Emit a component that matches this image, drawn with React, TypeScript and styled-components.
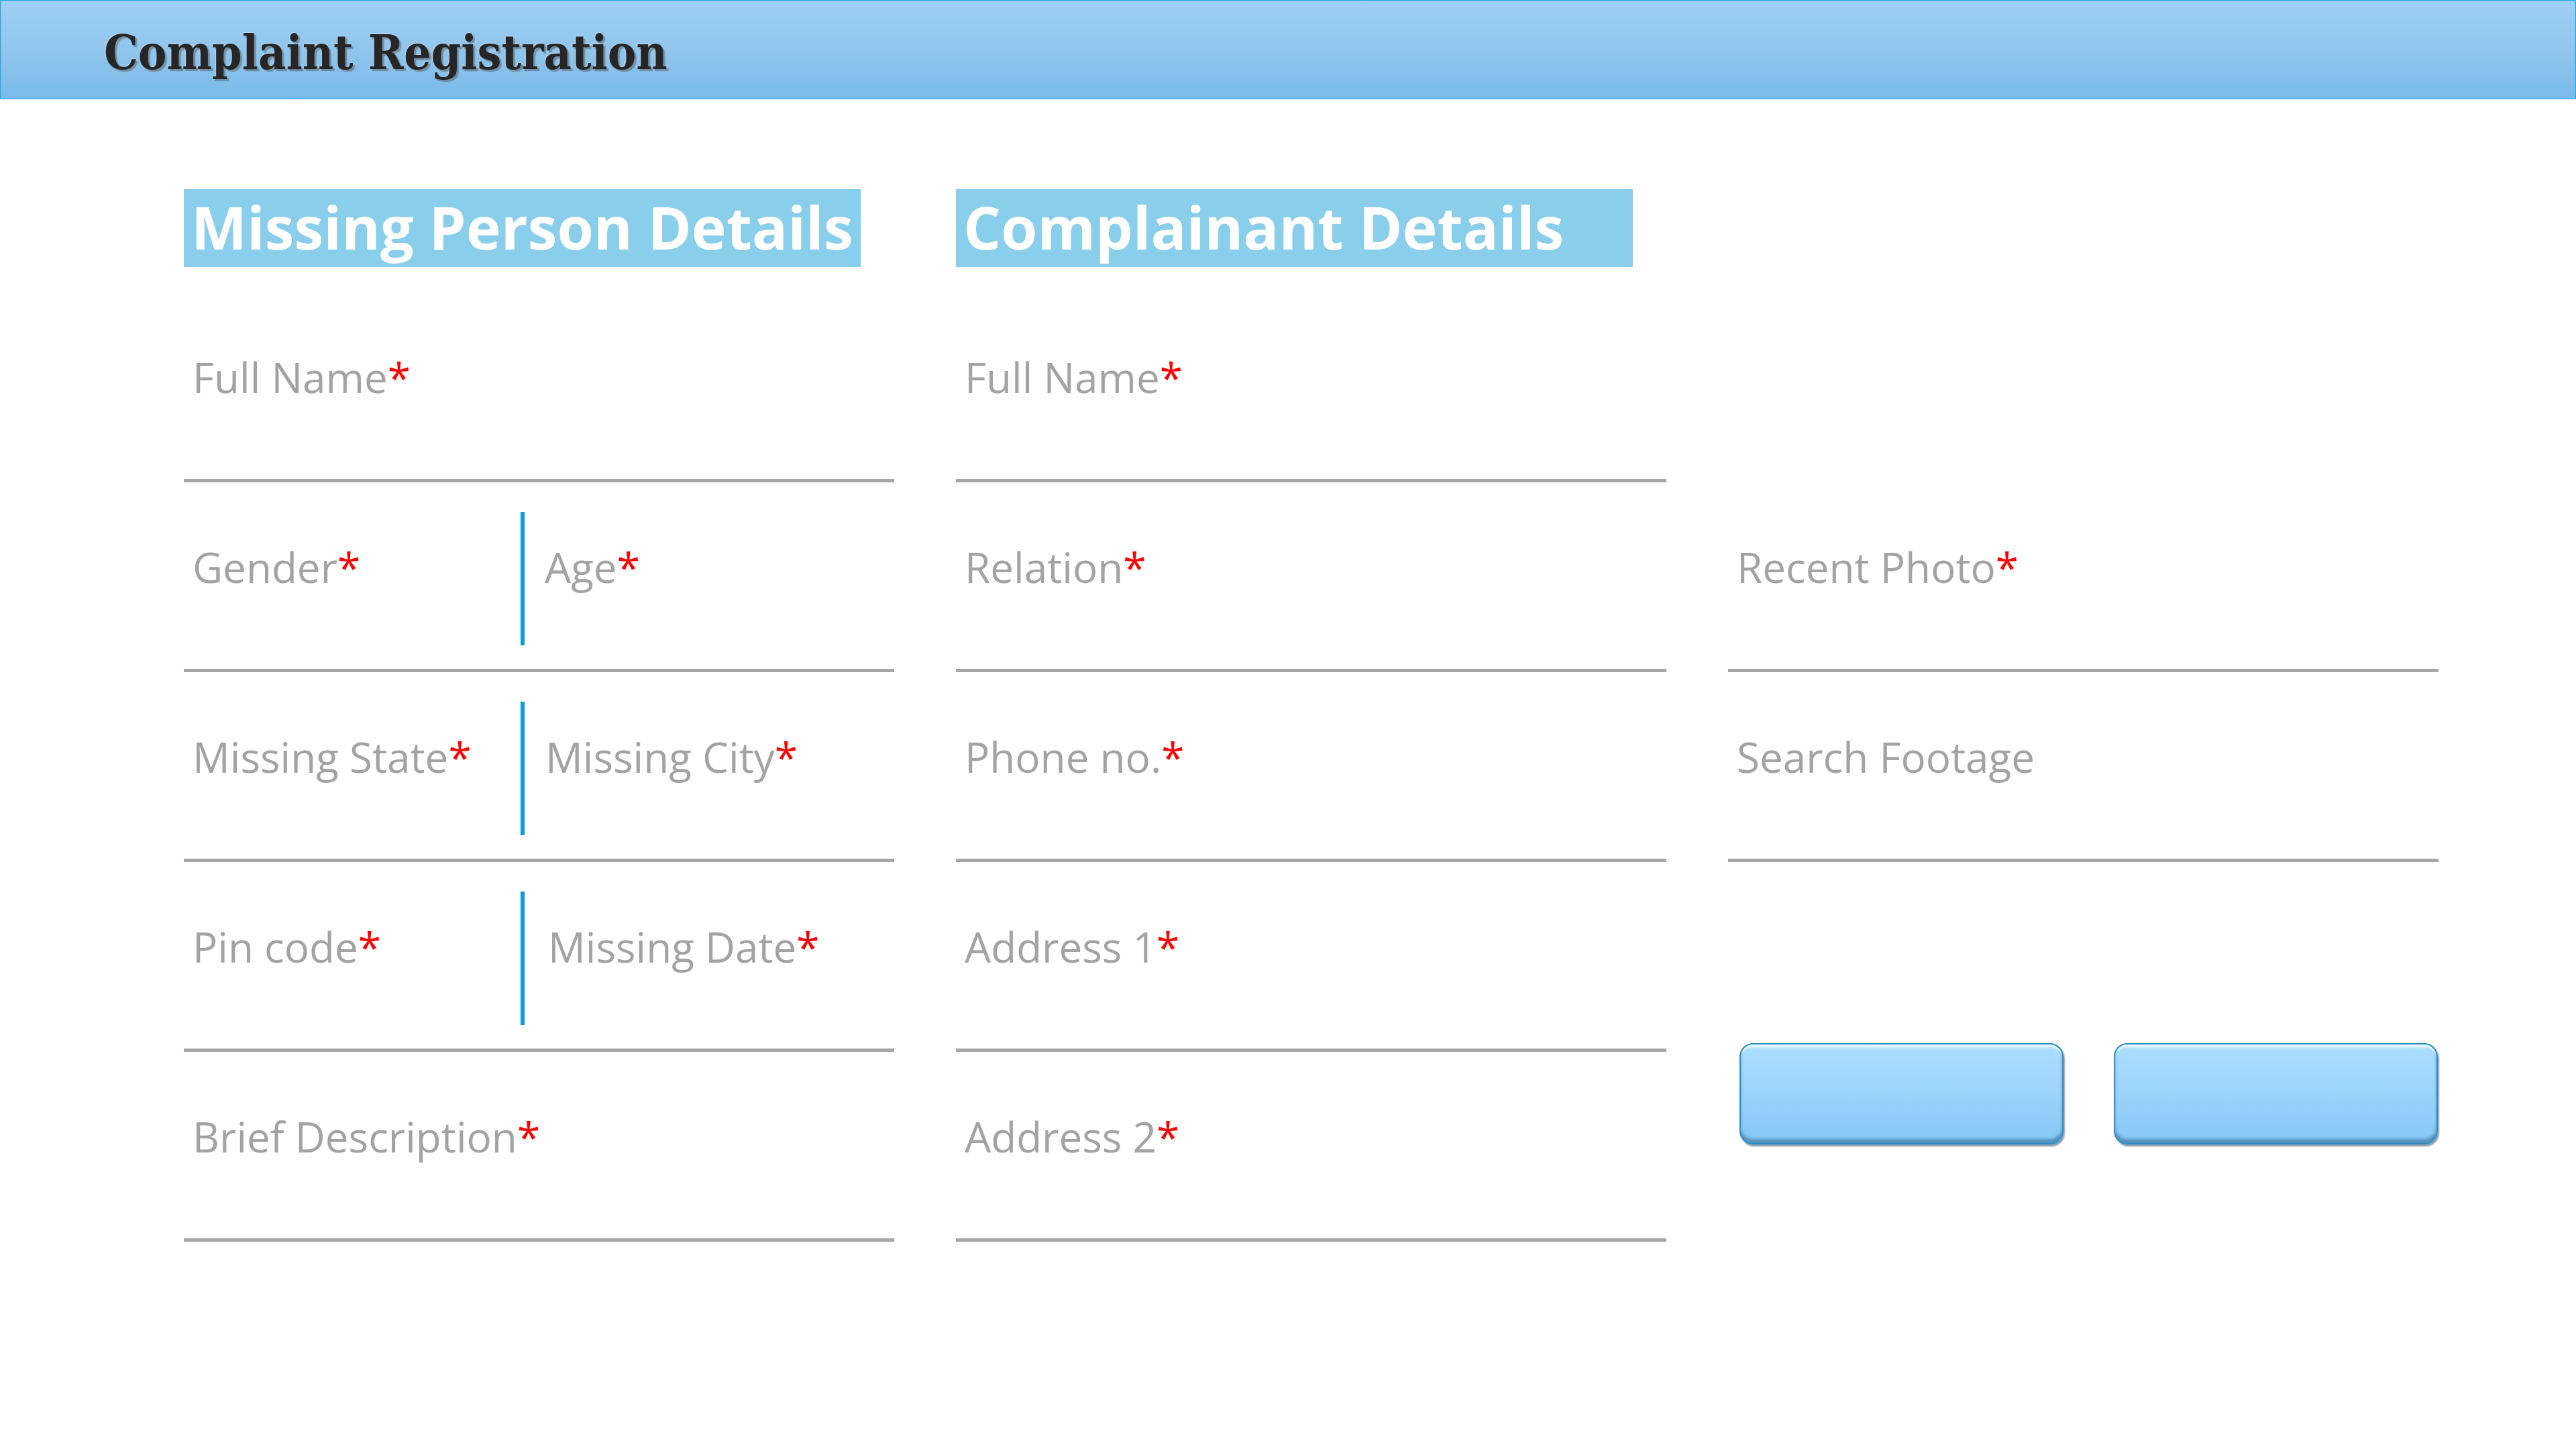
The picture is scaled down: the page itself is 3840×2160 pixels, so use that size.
import React from "react";
import styled, { createGlobalStyle } from "styled-components";

const GlobalStyle = createGlobalStyle`
  html, body {
    margin: 0;
    padding: 0;
    background: #ffffff;
  }
  body {
    width: 3840px;
    min-height: 2160px;
    font-family: "Open Sans", "Noto Sans", sans-serif;
  }
  * { box-sizing: border-box; }
`;

const Page = styled.div`
  width: 3840px;
  min-height: 2160px;
  background: #ffffff;
  display: flex;
  flex-direction: column;
`;

const Header = styled.header`
  height: 148px;
  border: 1px solid #1ba1df;
  background: linear-gradient(180deg, #9fd0f6 0%, #8fc4ec 55%, #78bbe9 100%);
  display: flex;
  align-items: center;
  padding: 8px 0 0 154px;
`;

const Title = styled.h1`
  margin: 0;
  font-family: "DejaVu Serif", "Liberation Serif", serif;
  font-weight: 700;
  font-stretch: condensed;
  font-size: 71px;
  line-height: 1;
  color: #262626;
  text-shadow: 3px 3px 1px rgba(90, 90, 90, 0.5), -1px -1px 0 rgba(255, 255, 255, 0.35);
`;

const Form = styled.main`
  display: grid;
  grid-template-columns: repeat(3, 1059px);
  column-gap: 92px;
  row-gap: 38px;
  padding: 134px 0 0 274px;
`;

const SectionTitle = styled.h2<{ $blank?: boolean }>`
  margin: 0;
  width: 1009px;
  height: 116px;
  display: flex;
  align-items: center;
  padding: 0 0 4px 11px;
  background: ${(p) => (p.$blank ? "transparent" : "#89ceeb")};
  color: #ffffff;
  font-family: "Open Sans", "Noto Sans", sans-serif;
  font-weight: 700;
  font-size: 88px;
  white-space: nowrap;
`;

const Column = styled.section`
  display: flex;
  flex-direction: column;
`;

const Field = styled.div<{ $noLine?: boolean }>`
  height: 283px;
  display: flex;
  align-items: flex-start;
  border-bottom: 5px solid ${(p) => (p.$noLine ? "transparent" : "#a6a6a6")};
`;

const Cell = styled.div<{ $width?: number; $inset: number }>`
  ${(p) => (p.$width ? `width: ${p.$width}px; flex: none;` : "flex: 1;")}
  padding-left: ${(p) => p.$inset}px;
`;

const Label = styled.div`
  padding-top: 84px;
  font-family: "Open Sans", "Noto Sans", sans-serif;
  font-size: 62px;
  line-height: 84px;
  color: #a3a3a3;
  white-space: nowrap;
`;

const Req = styled.span`
  color: #ff0000;
`;

const Divider = styled.div`
  flex: none;
  width: 6px;
  margin-top: 44px;
  height: 199px;
  background: #1199d6;
`;

const ButtonRow = styled.div`
  display: flex;
  gap: 75px;
  padding-left: 17px;
  margin-top: 270px;
`;

const GlossButton = styled.button`
  width: 483px;
  height: 151px;
  border: 2px solid #2a8fc6;
  border-radius: 20px;
  background: linear-gradient(180deg, #c9f0ff 0%, #aadcff 6%, #a0d6fb 40%, #86c7f6 100%);
  box-shadow:
    inset 0 -6px 4px rgba(20, 70, 110, 0.45),
    inset 0 4px 2px rgba(255, 255, 255, 0.6),
    2px 3px 2px rgba(0, 40, 70, 0.45);
  cursor: pointer;
`;

type LabelProps = { text: string; required?: boolean };

const FieldLabel = ({ text, required }: LabelProps) => (
  <Label>
    {text}
    {required && <Req>*</Req>}
  </Label>
);

const SingleField = ({ text, required }: LabelProps) => (
  <Field>
    <Cell $inset={13}>
      <FieldLabel text={text} required={required} />
    </Cell>
  </Field>
);

type SplitProps = {
  left: string;
  right: string;
  rightInset: number;
};

const SplitField = ({ left, right, rightInset }: SplitProps) => (
  <Field>
    <Cell $width={502} $inset={13}>
      <FieldLabel text={left} required />
    </Cell>
    <Divider />
    <Cell $inset={rightInset}>
      <FieldLabel text={right} required />
    </Cell>
  </Field>
);

export default function App() {
  return (
    <Page>
      <GlobalStyle />
      <Header>
        <Title>Complaint Registration</Title>
      </Header>
      <Form>
        <SectionTitle>Missing Person Details</SectionTitle>
        <SectionTitle>Complainant Details</SectionTitle>
        <SectionTitle $blank />

        <Column>
          <SingleField text="Full Name" required />
          <SplitField left="Gender" right="Age" rightInset={30} />
          <SplitField left="Missing State" right="Missing City" rightInset={31} />
          <SplitField left="Pin code" right="Missing Date" rightInset={35} />
          <SingleField text="Brief Description" required />
        </Column>

        <Column>
          <SingleField text="Full Name" required />
          <SingleField text="Relation" required />
          <SingleField text="Phone no." required />
          <SingleField text="Address 1" required />
          <SingleField text="Address 2" required />
        </Column>

        <Column>
          <Field $noLine />
          <SingleField text="Recent Photo" required />
          <SingleField text="Search Footage" />
          <ButtonRow>
            <GlossButton type="button" aria-label="Submit" />
            <GlossButton type="button" aria-label="Reset" />
          </ButtonRow>
        </Column>
      </Form>
    </Page>
  );
}
